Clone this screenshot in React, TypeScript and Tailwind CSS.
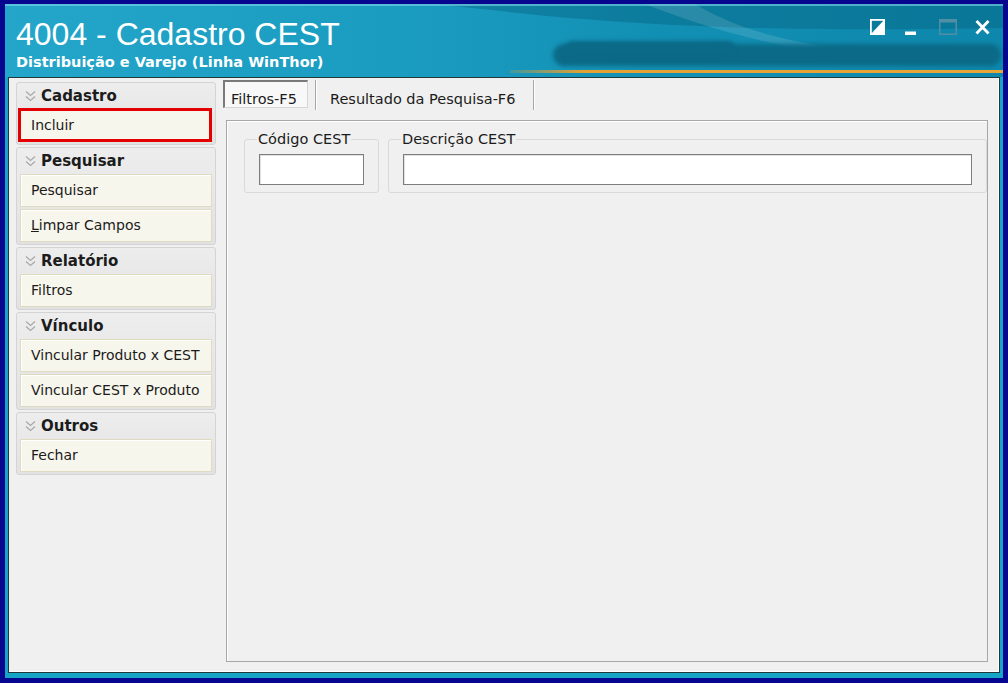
import React from "react";

type Group = { title: string; items: React.ReactNode[] };

const groups: Group[] = [
  { title: "Cadastro", items: ["Incluir"] },
  {
    title: "Pesquisar",
    items: [
      "Pesquisar",
      <>
        <span className="underline">L</span>impar Campos
      </>,
    ],
  },
  { title: "Relatório", items: ["Filtros"] },
  { title: "Vínculo", items: ["Vincular Produto x CEST", "Vincular CEST x Produto"] },
  { title: "Outros", items: ["Fechar"] },
];

const tahoma = "font-['DejaVu_Sans',Verdana,sans-serif]";

function Chevrons() {
  return (
    <svg width="11" height="12" viewBox="0 0 11 12" fill="none" stroke="#a8a8a8" strokeWidth="1.2">
      <path d="M1 1.5l4.5 4 4.5-4" />
      <path d="M1 6.5l4.5 4 4.5-4" />
    </svg>
  );
}

function WindowButtons() {
  return (
    <div className="relative flex items-start pt-[15px] pr-[13px]">
      <svg width="15" height="16" viewBox="0 0 15 16">
        <rect x="0.9" y="0.9" width="13.2" height="14.2" fill="none" stroke="#fff" strokeWidth="1.8" />
        <path d="M14 1 L14 15 L1 15 Z" fill="#fff" />
      </svg>
      <svg width="11" height="16" viewBox="0 0 11 16" className="ml-[20px]">
        <rect x="0" y="12.5" width="11" height="3.5" fill="#fff" />
      </svg>
      <svg width="18" height="16" viewBox="0 0 18 16" className="ml-[23px]">
        <rect x="0.75" y="0.75" width="16.5" height="14.5" fill="none" stroke="#4f8ea3" strokeWidth="1.5" />
        <rect x="0" y="0" width="18" height="3.5" fill="#4f8ea3" />
      </svg>
      <svg width="15" height="16" viewBox="0 0 15 16" className="ml-[18px]">
        <path d="M1.5 2 L13.5 14.5 M13.5 2 L1.5 14.5" stroke="#fff" strokeWidth="2.8" />
      </svg>
    </div>
  );
}

function TitleBar() {
  return (
    <div className="relative h-[73px] flex justify-between overflow-hidden bg-[linear-gradient(90deg,#23a6c9_0%,#1a9cc0_40%,#1290b4_65%,#0d87ab_100%)]">
      <svg className="absolute inset-0" width="998" height="73" viewBox="0 0 998 73" preserveAspectRatio="none">
        <path d="M430 0 C560 14 680 30 998 24 L998 0 Z" fill="#06607e" opacity="0.4" />
        <path d="M640 0 L690 0 C720 18 760 34 830 44 L790 44 C730 32 680 16 640 0 Z" fill="#ffffff" opacity="0.12" />
        <path d="M0 0 L998 0 L998 2 L0 2 Z" fill="#7fd6ea" opacity="0.6" />
      </svg>
      <div className="relative pl-[11px] pt-[12px] text-white">
        <div className="font-['Liberation_Sans',Arial,sans-serif] text-[32px] leading-[36px]">4004 - Cadastro CEST</div>
        <div className={`${tahoma} font-bold text-[14.5px] leading-[18px] mt-px`}>
          Distribuição e Varejo (Linha WinThor)
        </div>
      </div>
      <WindowButtons />
      {/* blurred info strip and accent line along the header */}
      <div className="absolute left-[548px] top-[40px] w-[448px] h-[22px] rounded-full bg-[#0b6a87] blur-[2px]" />
      <div className="absolute left-[560px] top-[37px] w-[170px] h-[15px] rounded-full bg-[#0b6a87] blur-[2px]" />
      <div className="absolute left-[505px] top-[66px] w-[493px] h-[3px] bg-[linear-gradient(90deg,rgba(229,161,51,0.2),#e5a133_15%,#e8a53a)]" />
    </div>
  );
}

function Sidebar() {
  return (
    <div className={`${tahoma} w-[200px] ml-[7px] mt-[4px] flex flex-col gap-[2px]`}>
      {groups.map((g) => (
        <div
          key={g.title}
          className="rounded-[3px] border border-[#d4d4d4] bg-[linear-gradient(180deg,#ededed,#e2e2e2)] px-[3px] pb-[2px]"
        >
          <div className="h-[26px] flex items-center pl-[5px] gap-[5px]">
            <Chevrons />
            <span className="font-bold text-[15px] text-[#1c1c1c]">{g.title}</span>
          </div>
          <div className="flex flex-col gap-[2px]">
            {g.items.map((it, i) =>
              it === "Incluir" ? (
                <div
                  key={i}
                  className="h-[34px] -ml-[2px] -mt-px flex items-center pl-[10px] border-[3px] border-[#e40000] bg-[#f7f6ec] text-[14px] text-[#1b1b1b]"
                >
                  {it}
                </div>
              ) : (
                <div
                  key={i}
                  className="h-[33px] flex items-center pl-[10px] border border-[#dedbc0] bg-[#f7f6ec] shadow-[inset_1px_1px_0_#ffffff] text-[14px] text-[#1b1b1b]"
                >
                  {it}
                </div>
              )
            )}
          </div>
        </div>
      ))}
    </div>
  );
}

function Field({ label, className }: { label: string; className: string }) {
  return (
    <fieldset className={`border border-[#d9d9d9] rounded-[3px] px-[14px] pb-[7px] ${className}`}>
      <legend className="-ml-[2px] px-[1px] text-[14.5px] leading-[16px] text-[#1b1b1b]">{label}</legend>
      <div className="mt-[7px] h-[31px] border border-[#7d7d7d] bg-white shadow-[inset_1px_1px_0_#e2e2e2]" />
    </fieldset>
  );
}

function MainArea() {
  return (
    <div className={`${tahoma} w-[765px] ml-[7px] mt-[2px] mb-[10px] flex flex-col`}>
      <div className="flex h-[30px] text-[14.5px] text-[#1b1b1b]">
        <div className="w-[85px] h-[28px] border-t-2 border-l-2 border-[#7a7a7a] border-r border-b border-r-[#d6d6d6] border-b-[#d6d6d6] bg-[#f8f8f8] pl-[6px] pt-[9px] leading-[17px]">
          Filtros-F5
        </div>
        <div className="ml-[7px] w-[2px] h-[30px] border-l border-[#a6a6a6] border-r border-r-white" />
        <div className="w-[216px] pl-[13px] pt-[11px] leading-[17px]">Resultado da Pesquisa-F6</div>
        <div className="w-[2px] h-[30px] border-l border-[#a6a6a6] border-r border-r-white" />
      </div>
      <div className="mt-[10px] ml-[3px] flex-1 border border-[#a7a7a7] shadow-[inset_1px_1px_0_#ffffff] bg-[#f0f0f0] pl-[17px] pt-[10px]">
        <div className="flex gap-[9px]">
          <Field label="Código CEST" className="w-[135px]" />
          <Field label="Descrição CEST" className="flex-1" />
        </div>
      </div>
    </div>
  );
}

export default function App() {
  return (
    <div className="w-[1008px] h-[683px] bg-[#06068f] pt-[4px] px-[5px] pb-[5px]">
      <div className="h-full flex flex-col bg-[#17a5c6]">
        <TitleBar />
        <div className="mx-[3px] h-[596px] border border-[#21393d] bg-[#f0f0f0] shadow-[inset_-1px_-1px_0_#ffffff] flex">
          <Sidebar />
          <MainArea />
        </div>
      </div>
    </div>
  );
}
